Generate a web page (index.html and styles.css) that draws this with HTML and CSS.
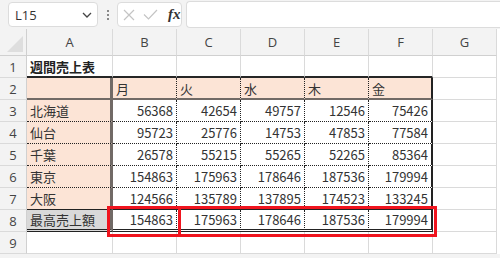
FILE: index.html
```html
<!DOCTYPE html>
<html lang="ja">
<head>
  <meta charset="UTF-8">
  <title>週間売上表</title>
  <link rel="stylesheet" href="styles.css">
</head>
<body>
<div class="toolbar">
  <div class="name-box">
    <span>L15</span>
    <svg class="chevron" width="10" height="6" viewBox="0 0 10 6"><path d="M1 1 L5 5 L9 1" fill="none" stroke="#444" stroke-width="1.3"/></svg>
  </div>
  <div class="grip">
    <svg width="4" height="12" viewBox="0 0 4 12"><circle cx="2" cy="2" r="1" fill="#666"/><circle cx="2" cy="6" r="1" fill="#666"/><circle cx="2" cy="10" r="1" fill="#666"/></svg>
  </div>
  <div class="fx-buttons">
    <svg width="12" height="12" viewBox="0 0 12 12"><path d="M1 1 L11 11 M11 1 L1 11" stroke="#c4c4c4" stroke-width="1.2"/></svg>
    <svg width="15" height="11" viewBox="0 0 15 11"><path d="M1 5.5 L5.5 10 L14 1" fill="none" stroke="#c4c4c4" stroke-width="1.2"/></svg>
    <span class="fx">fx</span>
  </div>
  <div class="formula"></div>
</div>

<div class="sheet-wrap">
  <div class="sheet">
    <!-- 列見出し -->
    <div class="c corner"><span class="tri"></span></div>
    <div class="c hd">A</div>
    <div class="c hd">B</div>
    <div class="c hd">C</div>
    <div class="c hd">D</div>
    <div class="c hd">E</div>
    <div class="c hd">F</div>
    <div class="c hd">G</div>

    <!-- 1 -->
    <div class="c rh">1</div>
    <div class="c title tb">週間売上表</div>
    <div class="c tb"></div>
    <div class="c tb"></div>
    <div class="c tb"></div>
    <div class="c tb"></div>
    <div class="c tb"></div>
    <div class="c"></div>

    <!-- 2 -->
    <div class="c rh">2</div>
    <div class="c lbl mr mb"></div>
    <div class="c day dr mb"></div>
    <div class="c day dr mb"></div>
    <div class="c day dr mb"></div>
    <div class="c day dr mb"></div>
    <div class="c day sr mb"></div>
    <div class="c"></div>

    <!-- 3 -->
    <div class="c rh">3</div>
    <div class="c lbl mr db">北海道</div>
    <div class="c num dr db">56368</div>
    <div class="c num dr db">42654</div>
    <div class="c num dr db">49757</div>
    <div class="c num dr db">12546</div>
    <div class="c num sr db">75426</div>
    <div class="c"></div>

    <!-- 4 -->
    <div class="c rh">4</div>
    <div class="c lbl mr db">仙台</div>
    <div class="c num dr db">95723</div>
    <div class="c num dr db">25776</div>
    <div class="c num dr db">14753</div>
    <div class="c num dr db">47853</div>
    <div class="c num sr db">77584</div>
    <div class="c"></div>

    <!-- 5 -->
    <div class="c rh">5</div>
    <div class="c lbl mr db">千葉</div>
    <div class="c num dr db">26578</div>
    <div class="c num dr db">55215</div>
    <div class="c num dr db">55265</div>
    <div class="c num dr db">52265</div>
    <div class="c num sr db">85364</div>
    <div class="c"></div>

    <!-- 6 -->
    <div class="c rh">6</div>
    <div class="c lbl mr db">東京</div>
    <div class="c num dr db">154863</div>
    <div class="c num dr db">175963</div>
    <div class="c num dr db">178646</div>
    <div class="c num dr db">187536</div>
    <div class="c num sr db">179994</div>
    <div class="c"></div>

    <!-- 7 -->
    <div class="c rh">7</div>
    <div class="c lbl mr st">大阪</div>
    <div class="c num dr st">124566</div>
    <div class="c num dr st">135789</div>
    <div class="c num dr st">137895</div>
    <div class="c num dr st">174523</div>
    <div class="c num sr st">133245</div>
    <div class="c"></div>

    <!-- 8 -->
    <div class="c rh">8</div>
    <div class="c lbl total mr dbl">最高売上額</div>
    <div class="c num dr dbl">154863</div>
    <div class="c num dr dbl">175963</div>
    <div class="c num dr dbl">178646</div>
    <div class="c num dr dbl">187536</div>
    <div class="c num sr dbl">179994</div>
    <div class="c"></div>

    <!-- 9 -->
    <div class="c rh">9</div>
    <div class="c"></div>
    <div class="c"></div>
    <div class="c"></div>
    <div class="c"></div>
    <div class="c"></div>
    <div class="c"></div>
    <div class="c"></div>
  </div>

  <!-- 赤枠 -->
  <div class="mark mark-b"></div>
  <div class="mark mark-cf"></div>
</div>

<script>
  // 曜日見出し
  const days = ['月', '火', '水', '木', '金'];
  document.querySelectorAll('.day').forEach((cell, i) => {
    cell.textContent = days[i];
  });
</script>
</body>
</html>
```

FILE: styles.css
```css
body {
  margin: 0;
  width: 500px;
  height: 258px;
  overflow: hidden;
  background-color: #f3f3f3;
  font-family: "Noto Sans CJK JP", "Noto Sans", sans-serif;
  color: #333;
}

.toolbar {
  display: flex;
  align-items: center;
  height: 29px;
  padding-left: 8px;
  box-sizing: border-box;
}

.name-box {
  display: flex;
  align-items: center;
  justify-content: space-between;
  width: 90px;
  height: 25px;
  box-sizing: border-box;
  padding: 0 5px 0 6px;
  background-color: white;
  border: 1px solid #dcdcdc;
  border-radius: 4px;
  font-family: "Open Sans", sans-serif;
  font-size: 13px;
  color: #333;
}

.grip {
  display: flex;
  align-items: center;
  justify-content: center;
  width: 19px;
}

.fx-buttons {
  display: flex;
  align-items: center;
  gap: 8px;
  width: 65px;
  height: 25px;
  box-sizing: border-box;
  padding-left: 5px;
  background-color: white;
  border: 1px solid #dcdcdc;
  border-radius: 4px;
}

.fx {
  font-family: "Liberation Serif", serif;
  font-style: italic;
  font-weight: bold;
  font-size: 15px;
  color: #333;
  margin-left: 2px;
}

.formula {
  flex: 1;
  height: 25px;
  margin-left: 4px;
  background-color: white;
  border: 1px solid #dcdcdc;
  border-right: none;
  border-radius: 4px 0 0 4px;
}

.sheet-wrap {
  position: relative;
}

.sheet {
  display: grid;
  grid-template-columns: 27px 86px repeat(6, 64px);
  grid-template-rows: 27px repeat(9, 22px);
  background-color: white;
  font-size: 13px;
}

.c {
  box-sizing: border-box;
  border-right: 1px solid #dadada;
  border-bottom: 1px solid #dadada;
  display: flex;
  align-items: center;
  padding: 0 3px;
  white-space: nowrap;
  overflow: hidden;
}

.corner {
  position: relative;
  background-color: #f3f3f3;
  border-color: #d0d0d0;
}

.tri {
  position: absolute;
  right: 3px;
  bottom: 3px;
  width: 0;
  height: 0;
  border-left: 16px solid transparent;
  border-bottom: 16px solid #dedede;
}

.hd {
  justify-content: center;
  background-color: #f3f3f3;
  border-bottom-color: #d0d0d0;
  font-family: "Open Sans", sans-serif;
  color: #444;
}

.rh {
  justify-content: center;
  background-color: #f3f3f3;
  border-right-color: #d0d0d0;
  font-family: "Open Sans", sans-serif;
  color: #444;
}

.title {
  font-weight: bold;
  color: #222;
}

.lbl {
  background-color: #fce4d6;
}

.day {
  background-color: #fce4d6;
}

.total {
  background-color: #d9d9d9;
}

.num {
  justify-content: flex-end;
}

/* 罫線 */
.tb {
  border-bottom: 2px solid #262626;
}

.dr {
  border-right: 1px dotted #222;
}

.db {
  border-bottom: 1px dotted #222;
}

.sr {
  border-right: 2px solid #222;
}

.mr {
  border-right: 3px solid #716a66;
}

.mb {
  border-bottom: 2px solid #716a66;
}

.st {
  border-bottom: 1px solid #222;
}

.dbl {
  border-bottom: 3px double #222;
}

.mark {
  position: absolute;
  border: 3px solid #f0141e;
  box-sizing: border-box;
}

.mark-b {
  left: 107px;
  top: 177px;
  width: 74px;
  height: 31px;
}

.mark-cf {
  left: 178px;
  top: 177px;
  width: 259px;
  height: 31px;
}
```
